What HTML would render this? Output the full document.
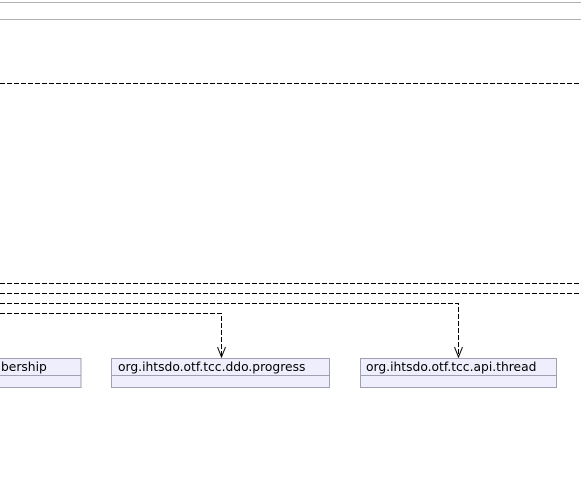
<html><body style="margin:0;width:581px;height:501px;background:#fff;overflow:hidden;position:relative">
<svg width="581" height="501" style="position:absolute;left:0;top:0" font-family="DejaVu Sans, sans-serif" font-size="12.3">
<line x1="0" y1="2.5" x2="581" y2="2.5" stroke="#b0b0b0"/>
<line x1="0" y1="19.5" x2="581" y2="19.5" stroke="#b0b0b0"/>
<g stroke="#000" stroke-dasharray="5,2" fill="none">
<line x1="0" y1="83.5" x2="581" y2="83.5"/>
<line x1="0" y1="283.5" x2="581" y2="283.5"/>
<line x1="0" y1="293.5" x2="581" y2="293.5"/>
<polyline points="0,303.5 458.5,303.5 458.5,357"/>
<polyline points="0,313.5 221.5,313.5 221.5,357"/>
</g>
<g stroke="#000" fill="none">
<polyline points="454.5,347 458.5,357 462.5,347"/>
<polyline points="217.5,347 221.5,357 225.5,347"/>
</g>
<g fill="#eeeefc" stroke="#a0a0b4">
<rect x="-10" y="358.5" width="91" height="29"/>
<rect x="111.5" y="358.5" width="218" height="29"/>
<rect x="360.5" y="358.5" width="196" height="29"/>
<line x1="0" y1="375.5" x2="81" y2="375.5"/>
<line x1="111" y1="375.5" x2="330" y2="375.5"/>
<line x1="360" y1="375.5" x2="557" y2="375.5"/>
</g>
<text x="-11" y="371">mbership</text>
<text x="118" y="371">org.ihtsdo.otf.tcc.ddo.progress</text>
<text x="366" y="371">org.ihtsdo.otf.tcc.api.thread</text>
</svg>
</body></html>
